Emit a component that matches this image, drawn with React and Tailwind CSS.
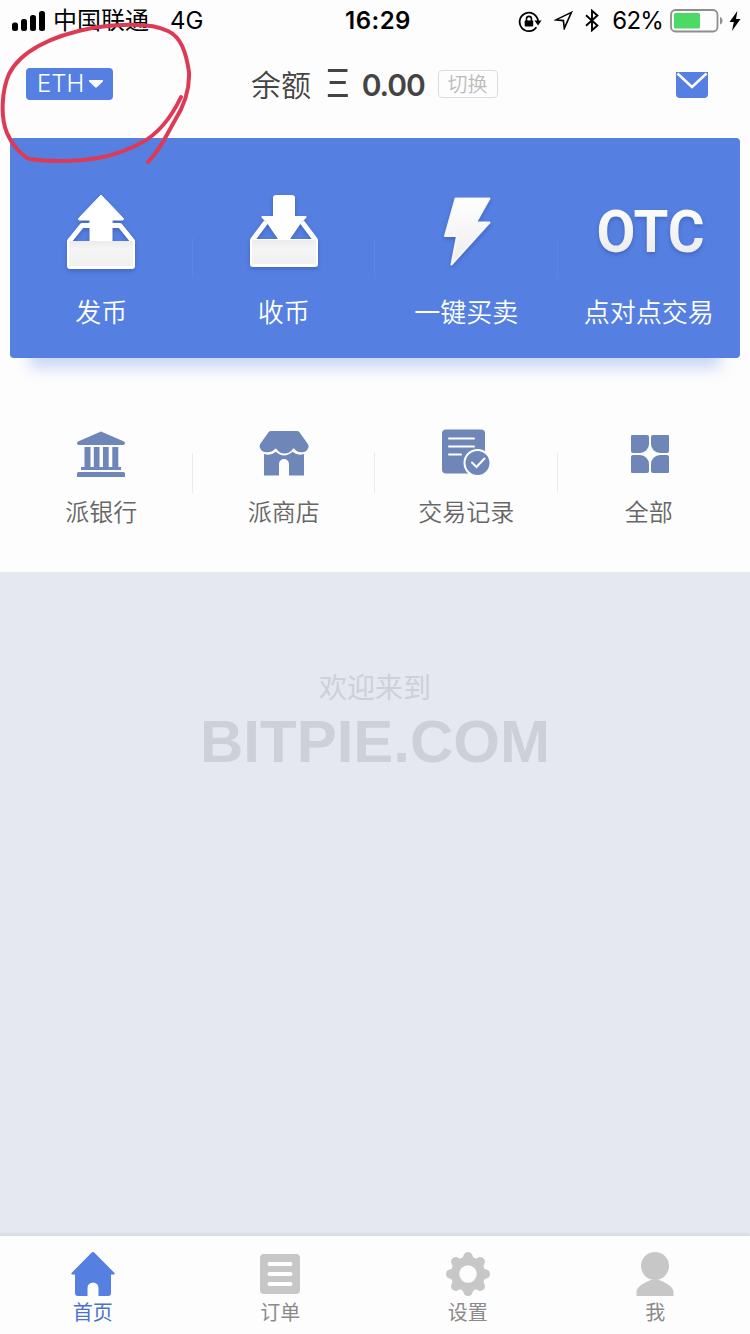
import { useState } from "react";

const SignalBars = () => (
  <svg className="w-[34px] h-5" viewBox="0 0 34 20" fill="#000">
    <rect x="0" y="11.5" width="6" height="8.5" rx="2.5" />
    <rect x="9" y="8" width="6" height="12" rx="2.5" />
    <rect x="18" y="4" width="6" height="16" rx="2.5" />
    <rect x="27" y="0" width="6" height="20" rx="2.5" />
  </svg>
);

const RotationLock = () => (
  <svg className="w-6 h-6" viewBox="0 0 24 24" fill="none">
    <path
      d="M18.4 18.2A9.2 9.2 0 1 1 20 12"
      stroke="#000"
      strokeWidth="1.8"
    />
    <path d="M16.4 11.600h7.200L20 16.400z" fill="#000" />
    <rect x="6.7" y="11.400" width="8.500" height="6.200" rx="0.800" fill="#000" />
    <path
      d="M8.500 12V9.800a2.450 2.450 0 0 1 4.900 0v2.200"
      stroke="#000"
      strokeWidth="1.600"
    />
  </svg>
);

const LocationArrow = () => (
  <svg className="w-[19px] h-[19px]" viewBox="0 0 19 19" fill="none">
    <path
      d="M17.400 1.400L1.800 8.900l7.600.7.9 7.800z"
      stroke="#000"
      strokeWidth="1.600"
      strokeLinejoin="miter"
    />
  </svg>
);

const Bluetooth = () => (
  <svg className="w-[14px] h-[23px]" viewBox="0 0 14 23" fill="none">
    <path
      d="M1 6.300l11.400 10.200L7 21.300V1.700l5.400 4.800L1 16.700"
      stroke="#000"
      strokeWidth="1.900"
    />
  </svg>
);

const Battery = () => (
  <svg className="w-[53px] h-6" viewBox="0 0 53 24" fill="none">
    <rect
      x="1"
      y="1"
      width="46.5"
      height="21.5"
      rx="4.5"
      stroke="#8e8e90"
      strokeWidth="1.8"
    />
    <rect x="4" y="4" width="26" height="15.5" rx="1.5" fill="#4cd964" />
    <path d="M50 8v7.500c1.600-.6 2.500-2 2.500-3.750S51.600 8.600 50 8z" fill="#8e8e90" />
  </svg>
);

const Charging = () => (
  <svg className="w-3 h-5" viewBox="0 0 12 20" fill="#000">
    <path d="M8.400 0L0.500 11h4.300L3 20 11.500 8H7z" />
  </svg>
);

const Mail = () => (
  <svg className="mt-[2px] w-8 h-[26px]" viewBox="0 0 32 26" fill="none">
    <path d="M0 0h32v22a4 4 0 0 1-4 4H4a4 4 0 0 1-4-4z" fill="#557fe1" />
    <path d="M1.500 1.500L16 15 30.500 1.500" stroke="#fff" strokeWidth="2.400" />
  </svg>
);

const TrayGradient = ({ id }) => (
  <defs>
    <linearGradient id={id} x1="0" y1="0" x2="0" y2="1">
      <stop offset="0" stopColor="#ececec" />
      <stop offset="0.35" stopColor="#f5f5f5" />
      <stop offset="1" stopColor="#f0f0f0" />
    </linearGradient>
  </defs>
);

const SendIcon = () => (
  <svg
    className="w-[70px] h-[76px] drop-shadow-[0_2px_2px_rgba(40,70,150,0.45)]"
    viewBox="0 0 70 76"
  >
    <TrayGradient id="sendTray" />
    <path
      d="M16 31.500h38L66.500 47v3H3.500v-3z"
      fill="none"
      stroke="#fff"
      strokeWidth="5"
      strokeLinejoin="round"
    />
    <path d="M22 27h26v2H22z" fill="#557fe1" />
    <path
      d="M35 1L57.300 24.300a1 1 0 0 1-.7 1.700H46V50H24V26H13.400a1 1 0 0 1-.7-1.700z"
      fill="#fff"
      stroke="#fff"
      strokeLinejoin="round"
    />
    <rect x="1" y="47" width="68" height="28" rx="3" fill="#fff" />
    <rect x="3" y="47" width="64" height="25" fill="url(#sendTray)" />
  </svg>
);

const ReceiveIcon = () => (
  <svg
    className="w-[70px] h-[76px] drop-shadow-[0_2px_2px_rgba(40,70,150,0.45)]"
    viewBox="0 0 70 76"
  >
    <TrayGradient id="receiveTray" />
    <path
      d="M17 28L3.500 46v4h63v-4L53 28"
      fill="none"
      stroke="#fff"
      strokeWidth="5"
      strokeLinejoin="round"
    />
    <path
      d="M27 1h16a3 3 0 0 1 3 3v18h10.500a1 1 0 0 1 1 1.600L52 29 40.500 46h-11L18 29l-5.500-5.400a1 1 0 0 1 1-1.600H24V4a3 3 0 0 1 3-3z"
      fill="#fff"
    />
    <rect x="1" y="45" width="68" height="28" rx="3" fill="#fff" />
    <rect x="3" y="46" width="64" height="24" fill="url(#receiveTray)" />
  </svg>
);

const FlashIcon = () => (
  <svg
    className="w-[50px] h-[72px] drop-shadow-[0_2px_2px_rgba(40,70,150,0.45)]"
    viewBox="0 0 50 72"
  >
    <defs>
      <linearGradient id="flash" x1="0" y1="0" x2="0" y2="1">
        <stop offset="0" stopColor="#ffffff" />
        <stop offset="1" stopColor="#ececec" />
      </linearGradient>
    </defs>
    <path
      d="M14.500 2.500h34L35 26.500h13.500L10.500 68.500 16 40H4z"
      fill="url(#flash)"
      stroke="#f8f8f8"
      strokeWidth="2"
      strokeLinejoin="round"
    />
  </svg>
);

const OtcIcon = () => (
  <div className="mr-[-3px] font-['Roboto',sans-serif] font-bold text-[60px] leading-[60px] scale-x-[0.94] bg-gradient-to-b from-white to-[#e9e9ec] bg-clip-text text-transparent drop-shadow-[0_2px_2px_rgba(40,70,150,0.45)]">
    OTC
  </div>
);

const BankIcon = () => (
  <svg className="w-[50px] h-[46px]" viewBox="0 0 50 46" fill="#6f86b9">
    <path d="M25 .5L48 10.500q1 .6 1 1.500 0 2-1.800 2H2.800Q1 14 1 12q0-.9 1-1.500z" />
    <rect x="8.500" y="16" width="6" height="20" />
    <rect x="17.800" y="16" width="5.700" height="20" />
    <rect x="27" y="16" width="5.700" height="20" />
    <rect x="36.300" y="16" width="6" height="20" />
    <path d="M5 36h40v3H5z" />
    <path d="M2.500 41h45q1.500 0 1.500 1.500V46H1v-3.500Q1 41 2.500 41z" />
  </svg>
);

const ShopIcon = () => (
  <svg className="w-[50px] h-[46px]" viewBox="0 0 50 46" fill="#6f86b9">
    <path d="M12 0h26q1.500 0 2.500 1.200l8 11.300q1.500 2 .8 4.200a7 7 0 0 1-6.800 4.600q-4.500 0-7-3.300a1 1 0 0 0-1.700 0Q30.500 22.500 25.500 22.500T17.500 18a1 1 0 0 0-1.600 0q-3 3.300-7.400 3.300A7.500 7.500 0 0 1 .9 16.700Q.2 14.500 1.500 12.500L9.500 1.200Q10.500 0 12 0z" />
    <path d="M5 23q7 2 12-2.200 8 7.500 16.400 0Q38.500 25 45 23v21.500H30V33a5 5 0 0 0-10 0v11.500H5z" />
  </svg>
);

const RecordIcon = () => (
  <svg className="mb-[2px] w-[50px] h-[48px]" viewBox="0 0 50 48" fill="none">
    <rect x="1" y="0.500" width="43" height="44" rx="4" fill="#6f86b9" />
    <path
      d="M8 9.500h25M8 17.500h25M8 25.500h12"
      stroke="#fff"
      strokeWidth="2"
      strokeLinecap="round"
    />
    <circle
      cx="36.500"
      cy="34"
      r="13"
      fill="#6f86b9"
      stroke="#fff"
      strokeWidth="2"
    />
    <path
      d="M31 33.500l4.500 4.500 8-8.500"
      stroke="#fff"
      strokeWidth="2"
      strokeLinecap="round"
    />
  </svg>
);

const AllIcon = () => (
  <svg className="ml-[2px] w-[38px] h-[38px]" viewBox="0 0 38 38" fill="#6f86b9">
    <path d="M1 0h15a2 2 0 0 1 2 2v7a9 9 0 0 1-9 9H2a2 2 0 0 1-2-2V1a1 1 0 0 1 1-1z" />
    <path d="M22 0h15a1 1 0 0 1 1 1v15a2 2 0 0 1-2 2h-7a9 9 0 0 1-9-9V2a2 2 0 0 1 2-2z" />
    <path d="M2 20h7a9 9 0 0 1 9 9v7a2 2 0 0 1-2 2H1a1 1 0 0 1-1-1V22a2 2 0 0 1 2-2z" />
    <path d="M29 20h7a2 2 0 0 1 2 2v15a1 1 0 0 1-1 1H22a2 2 0 0 1-2-2v-7a9 9 0 0 1 9-9z" />
  </svg>
);

const HomeIcon = () => (
  <svg className="w-11 h-11" viewBox="0 0 44 44" fill="currentColor">
    <path d="M20.500.7q1.500-1.200 3 0l20 20.300q.8 1.500-.8 1.500H40V41q0 3-3 3h-9.500V36a5.500 5.500 0 0 0-11 0v8H7q-3 0-3-3V22.500H1.300Q-.3 22.500.5 21z" />
  </svg>
);

const OrderIcon = () => (
  <svg className="w-11 h-11" viewBox="0 0 44 44" fill="none">
    <rect x="2" y="2" width="40" height="40" rx="4" fill="currentColor" />
    <path
      d="M11.500 12h21M11.500 22h21M11.500 32h21"
      stroke="#fff"
      strokeWidth="4"
      strokeLinecap="round"
    />
  </svg>
);

const GearIcon = () => (
  <svg className="w-11 h-11" viewBox="0 0 44 44" fill="none">
    <circle
      cx="22"
      cy="22"
      r="13"
      stroke="currentColor"
      strokeWidth="8.500"
    />
    {[0, 45, 90, 135, 180, 225, 270, 315].map((angle) => (
      <path
        key={angle}
        d="M14.500 8q2.500-1.500 3-4.500Q18.500 0 22 0t4.500 3.500q.5 3 3 4.500z"
        fill="currentColor"
        transform={`rotate(${angle} 22 22)`}
      />
    ))}
  </svg>
);

const UserIcon = () => (
  <svg className="w-11 h-11" viewBox="0 0 44 44" fill="currentColor">
    <circle cx="22" cy="14" r="14" />
    <path d="M19 27.500h6Q39.500 33 40.500 39v5h-37v-5Q4.500 33 19 27.500z" />
  </svg>
);

// Hand drawn marker around the coin switcher
const Marker = () => (
  <svg
    className="absolute left-0 top-0 w-[200px] h-[170px] pointer-events-none"
    viewBox="0 0 200 170"
    fill="none"
    stroke="#dd3b55"
    strokeWidth="4"
    strokeLinecap="round"
    strokeLinejoin="round"
  >
    <path d="M181 97C171 118 158 134 141 143C115 157 90 161 60 161Q43 161 30 159C23 157 12 145 7 133C0 116 2 90 9 74C20 52 50 36 92 28C120 24 150 22 168 31C181 37 186 52 189 72C190 92 183 108 174 122C166 136 160 150 148 162" />
  </svg>
);

const mainActions = [
  { label: "发币", icon: <SendIcon /> },
  { label: "收币", icon: <ReceiveIcon /> },
  { label: "一键买卖", icon: <FlashIcon /> },
  { label: "点对点交易", icon: <OtcIcon /> },
];

const subActions = [
  { label: "派银行", icon: <BankIcon /> },
  { label: "派商店", icon: <ShopIcon /> },
  { label: "交易记录", icon: <RecordIcon /> },
  { label: "全部", icon: <AllIcon /> },
];

const tabs = [
  { label: "首页", icon: <HomeIcon /> },
  { label: "订单", icon: <OrderIcon /> },
  { label: "设置", icon: <GearIcon /> },
  { label: "我", icon: <UserIcon /> },
];

const StatusBar = () => (
  <div className="h-10 pt-px flex items-center pl-3 pr-[9px] text-black text-2xl leading-10">
    <div className="w-[333px] flex items-center">
      <SignalBars />
      <span className="ml-[7px]">中国联通</span>
      <span className="ml-[21px]">4G</span>
    </div>
    <div className="font-semibold tracking-[0.5px]">16:29</div>
    <div className="flex-1 flex items-center justify-end">
      <RotationLock />
      <span className="ml-3 flex">
        <LocationArrow />
      </span>
      <span className="ml-3 flex">
        <Bluetooth />
      </span>
      <span className="ml-[13px] tracking-[-0.8px]">62%</span>
      <span className="ml-[7px] flex">
        <Battery />
      </span>
      <span className="ml-[6px] flex">
        <Charging />
      </span>
    </div>
  </div>
);

const Header = () => (
  <div className="h-[98px] pb-[10px] pl-[26px] pr-[42px] flex items-center">
    <button className="w-[87px] h-8 rounded bg-[#557fe1] text-white text-2xl leading-8 font-light flex items-center pl-[11px]">
      ETH
      <svg className="ml-1 w-4 h-2" viewBox="0 0 16 8" fill="#fff">
        <path d="M1.500 0h13q1.200.6.300 1.500L9 7.200q-1 .8-2 0L1.200 1.500Q.3.600 1.500 0z" />
      </svg>
    </button>
    <div className="ml-[138px] mr-auto flex items-center text-[#444] text-[30px] leading-8">
      <span className="mt-[2px] font-[350]">余额</span>
      <span className="ml-[16px] font-['Roboto',sans-serif] text-[38px] scale-x-[1.15]">
        Ξ
      </span>
      <span className="ml-[13px] mt-px font-semibold tracking-[-1.1px]">
        0.00
      </span>
      <button className="ml-[13px] w-[60px] h-7 rounded-sm border border-[#ddd] text-[#bbb] text-xl leading-none font-[350] flex items-center justify-center pt-px">
        切换
      </button>
    </div>
    <Mail />
  </div>
);

const App = () => {
  const [activeTab, setActiveTab] = useState("首页");

  return (
    <div className="relative w-full h-[1334px] flex flex-col overflow-hidden bg-[#e5e8f1] font-['Inter','Noto_Sans_CJK_SC',sans-serif]">
      <div className="h-[572px] bg-[#fdfdfd]">
        <StatusBar />
        <Header />
        <div className="mx-[10px] h-[220px] rounded bg-[#557fe1] grid grid-cols-4 shadow-[0_30px_14px_-20px_rgba(85,127,225,0.3)]">
          {mainActions.map((item, index) => (
            <div key={item.label} className="flex items-center">
              <div className="flex-1 h-full pt-[50px] flex flex-col items-center text-white">
                <div className="h-[88px] flex items-center">{item.icon}</div>
                <div className="mt-[17px] text-[26px] leading-10 font-[350] whitespace-nowrap">
                  {item.label}
                </div>
              </div>
              {index < 3 && (
                <div className="-ml-px mt-5 w-px h-10 bg-[#5e86e3]"></div>
              )}
            </div>
          ))}
        </div>
        <div className="mx-[10px] h-[214px] grid grid-cols-4">
          {subActions.map((item, index) => (
            <div key={item.label} className="flex items-center">
              <div className="flex-1 h-full pt-[66px] flex flex-col items-center text-[#666]">
                <div className="h-[60px] flex items-center">{item.icon}</div>
                <div className="mt-[9px] text-2xl leading-10 font-[350]">
                  {item.label}
                </div>
              </div>
              {index < 3 && (
                <div className="-ml-px mt-4 w-px h-10 bg-[#e9eaee]"></div>
              )}
            </div>
          ))}
        </div>
      </div>
      <div className="flex-1 pt-[96px] flex flex-col items-center text-[#cdd0d9]">
        <div className="text-[28px] leading-10">欢迎来到</div>
        <div className="mt-[2px] font-['Liberation_Sans',sans-serif] font-bold text-[60px] leading-[64px]">
          BITPIE.COM
        </div>
      </div>
      <div className="h-[99px] bg-[#fdfdfd] border-t border-[#d9dbe2] shadow-[0_-1px_4px_rgba(0,0,0,0.08)] grid grid-cols-4">
        {tabs.map((tab) => (
          <button
            key={tab.label}
            onClick={() => setActiveTab(tab.label)}
            className={`pt-4 pr-[2px] flex flex-col items-center ${
              activeTab === tab.label ? "text-[#557fe1]" : "text-[#c7c7c7]"
            }`}
          >
            {tab.icon}
            <span
              className={`mt-[3px] text-xl leading-7 ${
                activeTab === tab.label ? "text-[#4a72cc]" : "text-[#8a8a8a]"
              }`}
            >
              {tab.label}
            </span>
          </button>
        ))}
      </div>
      <Marker />
    </div>
  );
};

export default App;
